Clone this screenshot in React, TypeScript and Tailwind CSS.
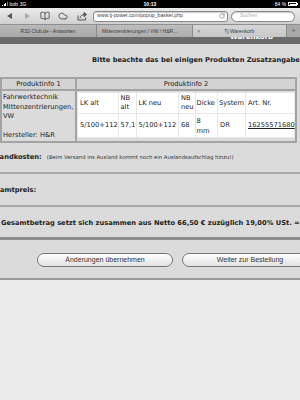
import { BookOpen, Cloud, RotateCw } from 'lucide-react';

function StatusBar() {
    return (
        <div className="h-[8px] bg-black flex items-center justify-between px-[2px] text-white text-[5px] leading-[8px] font-['Liberation_Sans',sans-serif]">
            <div className="flex items-center gap-[2px] w-[40px]">
                <div className="flex items-end gap-[0.5px] h-[4px]">
                    <span className="w-[1px] h-[1px] bg-white" />
                    <span className="w-[1px] h-[2px] bg-white" />
                    <span className="w-[1px] h-[3px] bg-white" />
                    <span className="w-[1px] h-[4px] bg-[#777]" />
                </div>
                <span>bob</span>
                <span>3G</span>
            </div>
            <span className="font-bold">10:13</span>
            <div className="flex items-center justify-end gap-[2px] w-[40px]">
                <span>84 %</span>
                <div className="flex items-center">
                    <div className="w-[9px] h-[4px] border-[0.5px] border-white p-[0.5px]">
                        <div className="w-[6px] h-full bg-white" />
                    </div>
                    <span className="w-[0.8px] h-[2px] bg-white" />
                </div>
            </div>
        </div>
    );
}

function ShareIcon() {
    return (
        <svg width="11" height="9" viewBox="0 0 22 18" fill="none" stroke="#555" strokeWidth="2">
            <path d="M2 7v9h15v-5" />
            <path d="M6 12c1-5 5-7 10-7" />
            <path d="M14 1l5 4-5 4z" fill="#555" />
        </svg>
    );
}

function Toolbar() {
    return (
        <div className="h-[17px] bg-gradient-to-b from-[#ececec] to-[#cfcfcf] border-b border-[#8f8f8f] flex items-center font-['Liberation_Sans',sans-serif]">
            <div className="flex items-center pl-[7px]">
                <svg width="5" height="6" viewBox="0 0 5 6"><path d="M5 0v6L0 3z" fill="#555" /></svg>
                <svg width="5" height="6" viewBox="0 0 5 6" className="ml-[13px]"><path d="M0 0v6l5-3z" fill="#aaa" /></svg>
                <BookOpen size={10} color="#555" strokeWidth={2.2} className="ml-[10px]" />
                <Cloud size={10} color="#555" strokeWidth={2.2} className="ml-[8px]" />
                <div className="ml-[9px]"><ShareIcon /></div>
            </div>
            <div className="ml-[5px] w-[135px] h-[11px] bg-white border border-[#8a8a8a] rounded-[3px] flex items-center justify-between pl-[3px] pr-[2px] shadow-[inset_0_1px_1px_rgba(0,0,0,0.2)]">
                <span className="text-[5.2px] text-[#444] whitespace-nowrap">www.tj-power.com/popup_basket.php</span>
                <RotateCw size={6} color="#777" strokeWidth={2.5} />
            </div>
            <div className="ml-[3px] w-[64px] h-[11px] bg-white border border-[#8a8a8a] rounded-full flex items-center pl-[8px] shadow-[inset_0_1px_1px_rgba(0,0,0,0.2)]">
                <span className="text-[5px] text-[#b0b0b0]">Suchen</span>
            </div>
        </div>
    );
}

function Tabs() {
    return (
        <div className="h-[12px] bg-[#a9a9a9] flex text-[5px] text-[#3a3a3a] font-['Liberation_Sans',sans-serif] leading-[12px]">
            <div className="w-[97px] text-center border-r border-[#8a8a8a] bg-gradient-to-b from-[#b8b8b8] to-[#a9a9a9] whitespace-nowrap">R32-Club.de - Antworten</div>
            <div className="w-[96px] pl-[5px] border-r border-[#8a8a8a] bg-gradient-to-b from-[#bdbdbd] to-[#adadad] whitespace-nowrap overflow-hidden">Mittenzentrierungen / VW / H&amp;R...</div>
            <div className="w-[94px] flex bg-gradient-to-b from-[#d6d6d6] to-[#c7c7c7] border-r border-[#8a8a8a]">
                <span className="pl-[4px] text-[6px] text-[#777]">×</span>
                <span className="flex-1 text-center pr-[8px]">Tj Warenkorb</span>
            </div>
            <div className="flex-1 text-center text-[8px] text-[#666] leading-[11px]">+</div>
        </div>
    );
}

export default function App() {
    const cell = 'px-[2px] align-middle';
    return (
        <div className="w-[300px] h-[400px] overflow-hidden bg-[#ececec] font-['DejaVu_Sans',sans-serif] text-[#222]">
            <StatusBar />
            <Toolbar />
            <Tabs />

            {/* page header band */}
            <div className="h-[7px] bg-[#6b6b6b] overflow-hidden">
                <div className="-mt-[4px] pl-[230px] text-white font-bold text-[7px] leading-[9px]">Warenkorb</div>
            </div>

            <div className="bg-[#dbdbdb] overflow-hidden text-[6.7px] text-[#222]">
                <div className="h-[33px] pt-[12px] pl-[92px] font-bold whitespace-nowrap leading-[9px] overflow-hidden">
                    Bitte beachte das bei einigen Produkten Zusatzangaben
                </div>

                <table className="w-[297px] table-fixed border-collapse text-[#222]">
                    <colgroup>
                        <col className="w-[75px]" />
                        <col />
                    </colgroup>
                    <thead>
                        <tr className="h-[12px]">
                            <th className="border-2 border-[#a3a3a3] bg-[#d3d3d3] font-normal text-center leading-[8px]">Produktinfo 1</th>
                            <th className="border-2 border-[#a3a3a3] bg-[#d3d3d3] font-normal text-center leading-[8px]">Produktinfo 2</th>
                        </tr>
                    </thead>
                    <tbody>
                        <tr>
                            <td className="border-2 border-[#a3a3a3] align-top pl-[1px] pt-[2px] leading-[9.5px] text-[#222]">
                                Fahrwerktechnik
                                <br />
                                Mittenzentrierungen,
                                <br />
                                VW
                                <br />
                                <br />
                                Hersteller: H&amp;R
                            </td>
                            <td className="border-2 border-[#a3a3a3] pl-[0px] pr-[0px] pt-[1px] pb-[2px] align-top">
                                <table className="w-full table-fixed border-separate border-spacing-[1px] bg-[#e8e8e8] leading-[9px] text-[#222]">
                                    <colgroup>
                                        <col className="w-[39.5px]" />
                                        <col className="w-[17px]" />
                                        <col className="w-[41.5px]" />
                                        <col className="w-[16px]" />
                                        <col className="w-[21px]" />
                                        <col className="w-[27px]" />
                                        <col />
                                    </colgroup>
                                    <tbody>
                                        <tr className="h-[20px] bg-white">
                                            <td className={cell}>LK alt</td>
                                            <td className={cell}>NB<br />alt</td>
                                            <td className={cell}>LK neu</td>
                                            <td className={cell}>NB<br />neu</td>
                                            <td className="pl-[0.5px] align-middle">Dicke</td>
                                            <td className="pl-[1px] align-middle">System</td>
                                            <td className={cell}>Art. Nr.</td>
                                        </tr>
                                        <tr className="h-[23px] bg-white">
                                            <td className={cell}>5/100+112</td>
                                            <td className={cell}>57,1</td>
                                            <td className={cell}>5/100+112</td>
                                            <td className={cell}>68</td>
                                            <td className="pl-[0.5px] align-middle leading-[10px]">8<br />mm</td>
                                            <td className={cell}>DR</td>
                                            <td className={cell}>
                                                <span className="underline">16255571680</span>
                                            </td>
                                        </tr>
                                    </tbody>
                                </table>
                            </td>
                        </tr>
                    </tbody>
                </table>

                <div className="h-[31px] pt-[10px] leading-[9px] border-b-2 border-[#a8a8a8]">
                    <p className="-ml-[17px] whitespace-nowrap">
                        <span className="font-bold">Versandkosten:</span>{' '}
                        <span className="text-[5.3px] ml-[3px] text-[#333]">(Beim Versand ins Ausland kommt noch ein Auslandsaufschlag hinzu!)</span>
                    </p>
                </div>

                <div className="h-[33px] pt-[12px] leading-[9px] border-b-2 border-[#a8a8a8]">
                    <p className="-ml-[14px] whitespace-nowrap font-bold">Gesamtpreis:</p>
                </div>

                <div className="h-[33px] pt-[12px] pl-[1px] leading-[9px] border-b-[3px] border-[#8c8c8c]">
                    <p className="whitespace-nowrap font-bold">Gesamtbetrag setzt sich zusammen aus Netto 66,50 € zuzüglich 19,00% USt. =</p>
                </div>

                <div className="h-[40px] pt-[13px] pl-[37px] flex gap-[9px] border-b-2 border-[#9a9a9a] font-['Liberation_Sans',sans-serif]">
                    <button className="w-[136px] h-[14px] shrink-0 rounded-[7px] border border-[#777] bg-gradient-to-b from-white to-[#e2e2e2] text-[7px] text-[#333] leading-[12px]">
                        Änderungen übernehmen
                    </button>
                    <button className="w-[136px] h-[14px] shrink-0 rounded-[7px] border border-[#777] bg-gradient-to-b from-white to-[#e2e2e2] text-[7px] text-[#333] leading-[12px]">
                        Weiter zur Bestellung
                    </button>
                </div>
            </div>
        </div>
    );
}
